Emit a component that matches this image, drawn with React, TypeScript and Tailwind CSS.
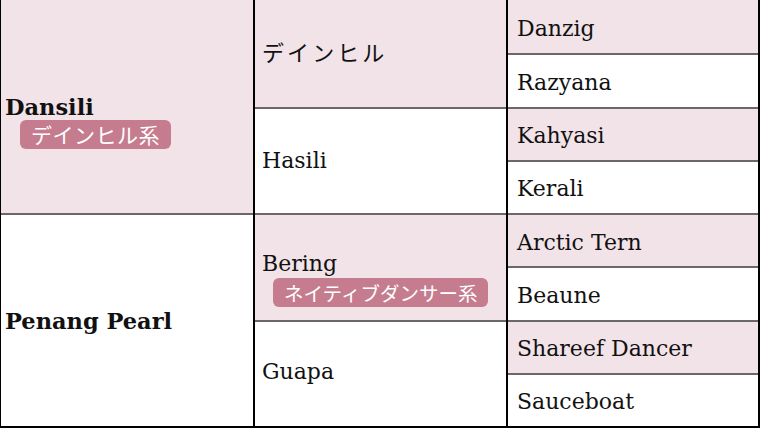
const PINK = "bg-[#f2e3e8]"

const serif = { fontFamily: '"DejaVu Serif", "Liberation Serif", serif' }
const jp = { fontFamily: '"Noto Sans CJK JP", "Noto Sans", sans-serif' }

function Badge({ text, size }: { text: string; size: string }) {
    return (
        <div className="flex">
            <span
                className={`rounded-[6px] bg-[#c47c8e] px-[11px] text-white leading-[29px] h-[29px] -mb-[29px] ${size}`}
                style={jp}
            >
                {text}
            </span>
        </div>
    )
}

export default function App() {
    const col3 = [
        "Danzig",
        "Razyana",
        "Kahyasi",
        "Kerali",
        "Arctic Tern",
        "Beaune",
        "Shareef Dancer",
        "Sauceboat",
    ]

    return (
        <div className="w-[760px] h-[428px] flex border-l border-r-2 border-b-2 border-black bg-white text-[#111]">
            {/* 1st generation */}
            <div className="w-[254px] grid grid-rows-2 border-r-2 border-black">
                <div className={`flex flex-col justify-center pl-[4px] ${PINK}`}>
                    <p className="text-[22.5px] font-bold leading-[26px]" style={serif}>Dansili</p>
                    <div className="ml-[15px]">
                        <Badge text="デインヒル系" size="text-[21px] tracking-[0.5px]" />
                    </div>
                </div>
                <div className="flex flex-col justify-center pl-[4px] border-t-2 border-[#6d676a]">
                    <p className="text-[22.5px] font-bold leading-[26px] pt-[1px]" style={serif}>Penang Pearl</p>
                </div>
            </div>

            {/* 2nd generation */}
            <div className="w-[253px] grid grid-rows-4 border-r-2 border-black">
                <div className={`flex flex-col justify-center pl-[7px] pb-[4px] ${PINK}`}>
                    <p className="text-[22px] tracking-[0.14em] leading-[26px]" style={jp}>デインヒル</p>
                </div>
                <div className="flex flex-col justify-center pl-[7px] border-t-2 border-[#6d676a]">
                    <p className="text-[22px] leading-[26px]" style={serif}>Hasili</p>
                </div>
                <div className={`flex flex-col justify-center pl-[7px] pb-[6px] border-t-2 border-[#6d676a] ${PINK}`}>
                    <p className="text-[22px] leading-[26px]" style={serif}>Bering</p>
                    <div className="ml-[11px] mt-[1px]">
                        <Badge text="ネイティブダンサー系" size="text-[19.5px]" />
                    </div>
                </div>
                <div className="flex flex-col justify-center pl-[7px] pb-[4px] border-t-2 border-[#6d676a]">
                    <p className="text-[22px] leading-[26px]" style={serif}>Guapa</p>
                </div>
            </div>

            {/* 3rd generation */}
            <div className="flex-1 grid grid-rows-8">
                {col3.map((name, i) => (
                    <div
                        key={name}
                        className={`flex items-center pl-[9px] pt-[4px] ${i > 0 ? "border-t-2 border-[#6d676a]" : ""} ${i % 2 === 0 ? PINK : "bg-white"}`}
                    >
                        <p className="text-[22px] leading-[26px]" style={serif}>{name}</p>
                    </div>
                ))}
            </div>
        </div>
    )
}
